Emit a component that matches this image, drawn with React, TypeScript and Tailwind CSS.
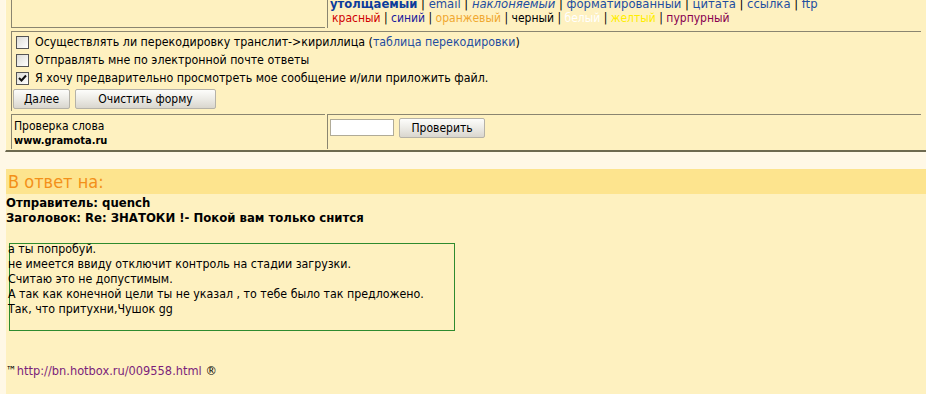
import React from "react";

const font = "font-['Tahoma','DejaVu_Sans_Condensed','Liberation_Sans',sans-serif]";

const Sep = () => <span className="text-black"> | </span>;

const CheckBox = ({ checked }: { checked?: boolean }) => (
  <span className="inline-flex h-[13px] w-[13px] shrink-0 items-center justify-center border border-[#555] bg-gradient-to-br from-[#dcdcd7] to-white">
    {checked && (
      <svg width="9" height="9" viewBox="0 0 9 9">
        <path d="M1 4 L3.5 6.5 L8 1.5" stroke="#111" strokeWidth="2" fill="none" />
      </svg>
    )}
  </span>
);

const Btn = ({ children, w }: { children: React.ReactNode; w: string }) => (
  <button
    className={`${w} flex h-[20px] items-center justify-center rounded-[2px] border border-[#b5b2a8] bg-gradient-to-b from-[#fdfdfb] via-[#ecebe6] to-[#d9d6ce] text-[12px] text-black`}
  >
    {children}
  </button>
);

export default function App() {
  return (
    <div className={`${font} h-[394px] w-[926px] overflow-hidden bg-[#fff8e6] text-[12.3px] text-black`}>
      {/* форма */}
      <div className="ml-[5px] border-b-2 border-l border-[#6e6a50] border-l-[#fffaea] bg-[#fef1c0] px-[5px] pb-[1px]">
        {/* верхняя строка (панель форматирования) */}
        <div className="grid grid-cols-[314px_1fr] gap-[2px]">
          <div className="h-[28px] border-b border-l border-[#8a8570] border-b-[#8a8570] bg-[#fef1c0]" />
          <div className="h-[28px] overflow-hidden border-l border-[#8a8570] pl-[2px] leading-[14px]">
            <div className="-mt-[3px] whitespace-nowrap text-[12.9px]">
              <b className="text-[#0c3c9c]">утолщаемый</b>
              <Sep />
              <span className="text-[#1f4ea0]">email</span>
              <Sep />
              <i className="text-[#1f4ea0]">наклоняемый</i>
              <Sep />
              <span className="text-[#1f4ea0]">форматированный</span>
              <Sep />
              <span className="text-[#1f4ea0]">цитата</span>
              <Sep />
              <span className="text-[#1f4ea0]">ссылка</span>
              <Sep />
              <span className="text-[#1f4ea0]">ftp</span>
            </div>
            <div className="whitespace-nowrap pl-[2px] text-[12px]">
              <span className="text-[#d00000]">красный</span>
              <Sep />
              <span className="text-[#1a1a9c]">синий</span>
              <Sep />
              <span className="text-[#f0a830]">оранжевый</span>
              <Sep />
              <span>черный</span>
              <Sep />
              <span className="text-white">белый</span>
              <Sep />
              <span className="text-[#ffee00]">желтый</span>
              <Sep />
              <span className="text-[#880050]">пурпурный</span>
            </div>
          </div>
        </div>

        {/* флажки */}
        <div className="mt-[3px] flex flex-col gap-[5px] border-l border-t border-[#8a8570] border-b-[#fffbea] border-r-[#fffbea] px-[4px] pb-[2px] pt-[4px]">
          <label className="flex items-center gap-[6px] leading-[13px]">
            <CheckBox />
            <span>
              Осуществлять ли перекодировку транслит-&gt;кириллица (
              <a className="text-[#1f4ea0]">таблица перекодировки</a>)
            </span>
          </label>
          <label className="flex items-center gap-[6px] leading-[13px]">
            <CheckBox />
            <span>Отправлять мне по электронной почте ответы</span>
          </label>
          <label className="flex items-center gap-[6px] leading-[13px]">
            <CheckBox checked />
            <span>Я хочу предварительно просмотреть мое сообщение и/или приложить файл.</span>
          </label>
          <div className="-ml-[3px] -mt-[1px] flex gap-[5px]">
            <Btn w="w-[57px]">Далее</Btn>
            <Btn w="w-[141px]">Очистить форму</Btn>
          </div>
        </div>

        {/* проверка слова */}
        <div className="mt-[3px] grid h-[35px] grid-cols-[314px_1fr] gap-[2px]">
          <div className="border-l border-t border-[#8a8570] pl-[2px] pt-[4px] text-[12px] leading-[14px]">
            <div>Проверка слова</div>
            <b className="text-[11px]">www.gramota.ru</b>
          </div>
          <div className="flex items-start gap-[5px] border-l border-t border-[#8a8570] pl-[2px] pt-[4px]">
            <input className="h-[17px] w-[64px] border border-[#b0ab98] bg-white outline-none" />
            <div className="-mt-[1px]">
              <Btn w="w-[86px] h-[19px]">Проверить</Btn>
            </div>
          </div>
        </div>
      </div>

      {/* ответ */}
      <div className="ml-[6px] mt-[17px] h-[226px] bg-[#fef1c0]">
        <div className="flex h-[25px] items-center bg-[#fde48e] pl-[2px] text-[18px] text-[#f39019]">
          В ответ на:
        </div>
        <div className="pt-[1px] text-[13px] font-bold leading-[15px]">
          <div>Отправитель: quench</div>
          <div>Заголовок: Re: ЗНАТОКИ !- Покой вам только снится</div>
        </div>
        <div className="ml-[3px] mt-[18px] h-[88px] w-[446px] border border-[#2e8b2e]">
          <div className="-ml-[2px] leading-[15px]">
            <div className="-mt-[2px]">а ты попробуй.</div>
            <div>не имеется ввиду отключит контроль на стадии загрузки.</div>
            <div>Считаю это не допустимым.</div>
            <div>А так как конечной цели ты не указал , то тебе было так предложено.</div>
            <div>Так, что притухни,Чушок gg</div>
          </div>
        </div>
        <div className="mt-[30px] text-[12.7px]">
          <span className="text-[12px]">™</span>
          <a className="text-[#7b1f7b]">http://bn.hotbox.ru/009558.html</a> ®
        </div>
      </div>
    </div>
  );
}
